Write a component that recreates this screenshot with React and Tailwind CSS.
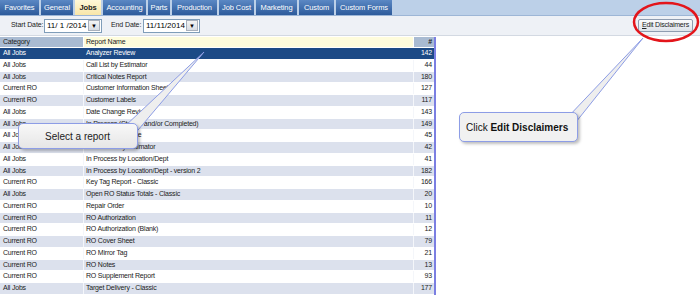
import React from "react";

const tabs = [
  { label: "Favorites", w: "w-[39px]" },
  { label: "General", w: "w-[32px]" },
  { label: "Jobs", w: "w-[26px]", active: true },
  { label: "Accounting", w: "w-[43px]" },
  { label: "Parts", w: "w-[22px]" },
  { label: "Production", w: "w-[45px]" },
  { label: "Job Cost", w: "w-[35px]" },
  { label: "Marketing", w: "w-[41px]" },
  { label: "Custom", w: "w-[35px]" },
  { label: "Custom Forms", w: "w-[56px]" },
];

const rows = [
  ["All Jobs", "Analyzer Review", 142],
  ["All Jobs", "Call List by Estimator", 44],
  ["All Jobs", "Critical Notes Report", 180],
  ["Current RO", "Customer Information Sheet", 127],
  ["Current RO", "Customer Labels", 117],
  ["All Jobs", "Date Change Review", 143],
  ["All Jobs", "In Process (Started and/or Completed)", 149],
  ["All Jobs", "In Process by Date", 45],
  ["All Jobs", "In Process by Estimator", 42],
  ["All Jobs", "In Process by Location/Dept", 41],
  ["All Jobs", "In Process by Location/Dept - version 2", 182],
  ["Current RO", "Key Tag Report - Classic", 166],
  ["All Jobs", "Open RO Status Totals - Classic", 20],
  ["Current RO", "Repair Order", 10],
  ["Current RO", "RO Authorization", 11],
  ["Current RO", "RO Authorization (Blank)", 12],
  ["Current RO", "RO Cover Sheet", 79],
  ["Current RO", "RO Mirror Tag", 21],
  ["Current RO", "RO Notes", 13],
  ["Current RO", "RO Supplement Report", 93],
  ["All Jobs", "Target Delivery - Classic", 177],
];

function DateBox({ value, w }) {
  return (
    <div className={`flex h-[14px] ${w} items-center border border-[#7f9db9] bg-white`}>
      <span className="flex-1 pl-[2px] text-[8px] text-black">{value}</span>
      <div className="mr-[1px] flex h-[11px] w-[12px] items-center justify-center border border-[#a8b0bc] bg-gradient-to-b from-[#f4f4f4] to-[#d8dde4]">
        <span className="text-[6px] leading-none text-black">▼</span>
      </div>
    </div>
  );
}

export default function App() {
  return (
    <div
      className="relative h-[296px] w-[700px] overflow-hidden bg-white"
      style={{ fontFamily: '"Liberation Sans", Arial, sans-serif' }}
    >
      {/* tabs */}
      <div className="flex h-[16px] gap-[2px] border-b border-[#9db6d6] bg-[#bcd0e8]">
        {tabs.map((t) => (
          <div
            key={t.label}
            className={`flex h-[15px] ${t.w} items-center justify-center text-[7.5px] tracking-[-0.1px] ${
              t.active
                ? "bg-gradient-to-b from-[#fff8d8] to-[#f8e6a8] font-bold text-[#1a1a1a]"
                : "bg-gradient-to-b from-[#5b88c4] to-[#2d5b9b] text-white"
            }`}
          >
            {t.label}
          </div>
        ))}
      </div>

      {/* toolbar */}
      <div className="flex h-[20px] items-center border-b border-[#d3d9e2] bg-[#eef1f6] pl-[11px] pr-[7px]">
        <span className="mr-[2px] w-[31px] whitespace-nowrap text-[7px] tracking-[-0.1px] text-[#222]">Start Date:</span>
        <DateBox value="11/ 1 /2014" w="w-[58px]" />
        <span className="ml-[9px] mr-[2px] w-[30px] whitespace-nowrap text-[7px] tracking-[-0.1px] text-[#222]">End Date:</span>
        <DateBox value="11/11/2014" w="w-[57px]" />
        <div className="ml-auto flex h-[13px] w-[55px] items-center justify-center rounded-[2px] border border-[#8e9cb0] bg-gradient-to-b from-[#fafbfc] to-[#dde3ea] text-[7px] tracking-[-0.2px] text-[#222]">
          <span className="underline">E</span>dit Disclaimers
        </div>
      </div>

      {/* grid */}
      <div className="mt-[1px] w-[436px] border-r-2 border-[#7b7fe2]">
        <div className="flex h-[11px] border-b border-white text-[7px] tracking-[-0.2px] text-[#222]">
          <div className="flex w-[84px] items-center border-r border-white bg-[#a9bbd2] pl-[3px]">Category</div>
          <div className="flex w-[330px] items-center border-r border-white bg-[#fefcdc] pl-[2px]">Report Name</div>
          <div className="flex flex-1 items-center justify-end bg-[#a9bbd2] pr-[2px] font-bold">#</div>
        </div>
        {rows.map(([cat, name, n], i) => {
          const sel = i === 0;
          const bg = sel ? "bg-[#1c4a86] text-white" : i % 2 === 0 ? "bg-[#dce1ed] text-[#222]" : "bg-white text-[#222]";
          return (
            <div key={name} className={`flex h-[11.75px] border-b border-white text-[7px] tracking-[-0.2px] ${bg}`}>
              <div className={`flex w-[84px] items-center pl-[3px] ${sel ? "" : "border-r border-[#f4f6fa]"}`}>{cat}</div>
              <div className={`flex w-[330px] items-center pl-[2px] ${sel ? "" : "border-r border-[#f4f6fa]"}`}>{name}</div>
              <div className="flex flex-1 items-center justify-end pr-[2px]">{n}</div>
            </div>
          );
        })}
      </div>

      {/* callout pointers + highlight */}
      <svg className="pointer-events-none absolute left-0 top-0" width="700" height="296">
        <polygon points="204,52 124,127 133,136" fill="#eeeeee" stroke="#8d9de6" strokeWidth="1" />
        <polygon points="643,38 567,118 572,127" fill="#eeeeee" stroke="#8d9de6" strokeWidth="1" />
        <ellipse cx="666" cy="22" rx="32" ry="19" fill="none" stroke="#e3151b" strokeWidth="2.5" />
      </svg>

      <div className="absolute left-[18px] top-[123px] flex h-[26px] w-[120px] items-center rounded-[5px] border border-[#8d9de6] bg-gradient-to-b from-[#f8f8f8] to-[#e6e6e6] pl-[26px] text-[10px] text-[#222] shadow-[2px_2px_3px_rgba(0,0,0,0.25)]">
        Select a report
      </div>

      <div className="absolute left-[459px] top-[112px] flex h-[30px] w-[119px] items-center rounded-[5px] border border-[#8d9de6] bg-[#f1f1f1] pl-[6px] text-[10px] text-[#111] shadow-[2px_2px_3px_rgba(0,0,0,0.25)]">
        Click&nbsp;<span className="font-bold">Edit Disclaimers</span>
      </div>
    </div>
  );
}
